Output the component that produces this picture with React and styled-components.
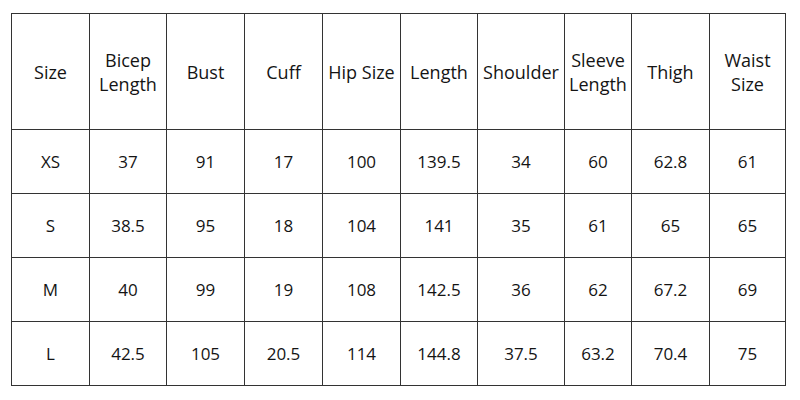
import React from 'react';
import styled, { createGlobalStyle } from 'styled-components';

const GlobalStyle = createGlobalStyle`
    body {
        margin: 0;
        background: #ffffff;
        font-family: "Open Sans", "Liberation Sans", sans-serif;
    }
`

const columns = [
    { label: ['Size'], width: 78 },
    { label: ['Bicep', 'Length'], width: 77 },
    { label: ['Bust'], width: 78 },
    { label: ['Cuff'], width: 78 },
    { label: ['Hip Size'], width: 78 },
    { label: ['Length'], width: 77 },
    { label: ['Shoulder'], width: 87 },
    { label: ['Sleeve', 'Length'], width: 67 },
    { label: ['Thigh'], width: 78 },
    { label: ['Waist', 'Size'], width: 76 },
]

const rows = [
    ['XS', '37', '91', '17', '100', '139.5', '34', '60', '62.8', '61'],
    ['S', '38.5', '95', '18', '104', '141', '35', '61', '65', '65'],
    ['M', '40', '99', '19', '108', '142.5', '36', '62', '67.2', '69'],
    ['L', '42.5', '105', '20.5', '114', '144.8', '37.5', '63.2', '70.4', '75'],
]

const App = () => {
    return (
        <Wrapper>
            <GlobalStyle />
            <Table>
                <colgroup>
                    {columns.map((c, i) => <col key={i} style={{ width: c.width }} />)}
                </colgroup>
                <thead>
                    <tr>
                        {columns.map((c, i) => (
                            <HeadCell key={i}>
                                {c.label.map((l, j) => <Line key={j}>{l}</Line>)}
                            </HeadCell>
                        ))}
                    </tr>
                </thead>
                <tbody>
                    {rows.map((r, i) => (
                        <tr key={i}>
                            {r.map((v, j) => <Cell key={j}>{v}</Cell>)}
                        </tr>
                    ))}
                </tbody>
            </Table>
        </Wrapper>
    )
}

export default App

const Wrapper = styled.div`
    width: 800px;
    height: 400px;
    padding: 13px 0 0 11px;
    box-sizing: border-box;
`

const Table = styled.table`
    border-collapse: collapse;
    table-layout: fixed;
    width: 774px;
    color: #141414;
    font-size: 17px;
`

const HeadCell = styled.th`
    height: 116px;
    padding: 0;
    border: 1px solid #333;
    font-size: 18px;
    font-weight: 400;
    text-align: center;
    vertical-align: middle;
    line-height: 24px;
    box-sizing: border-box;
`

const Line = styled.div`
    white-space: nowrap;
`

const Cell = styled.td`
    height: 64px;
    padding: 0;
    border: 1px solid #333;
    text-align: center;
    vertical-align: middle;
    box-sizing: border-box;
`
